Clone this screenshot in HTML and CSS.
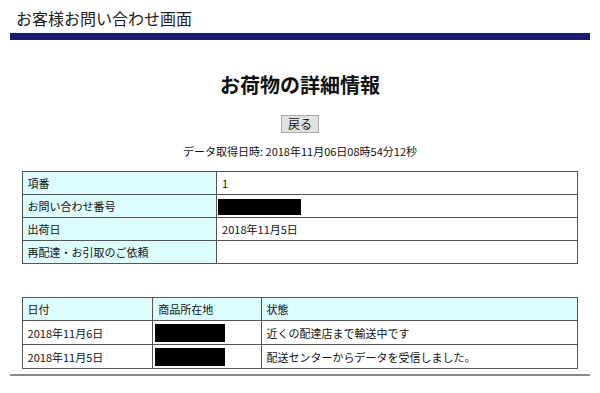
FILE: index.html
```html
<!DOCTYPE html>
<html lang="ja">
<head>
  <meta charset="UTF-8">
  <title>お客様お問い合わせ画面</title>
  <link rel="stylesheet" href="styles.css">
</head>
<body>
  <div class="page">
    <header>
      <div class="site-title">お客様お問い合わせ画面</div>
    </header>

    <h1>お荷物の詳細情報</h1>

    <div class="back">
      <button type="button">戻る</button>
    </div>

    <p class="fetched">データ取得日時: 2018年11月06日08時54分12秒</p>

    <!-- 詳細 -->
    <table class="detail">
      <tr>
        <th>項番</th>
        <td>1</td>
      </tr>
      <tr>
        <th>お問い合わせ番号</th>
        <td><span class="mask mask-no"></span></td>
      </tr>
      <tr>
        <th>出荷日</th>
        <td>2018年11月5日</td>
      </tr>
      <tr>
        <th>再配達・お引取のご依頼</th>
        <td></td>
      </tr>
    </table>

    <!-- 履歴 -->
    <table class="history">
      <tr>
        <th class="col-date">日付</th>
        <th class="col-place">商品所在地</th>
        <th>状態</th>
      </tr>
      <tr>
        <td>2018年11月6日</td>
        <td><span class="mask mask-place"></span></td>
        <td>近くの配達店まで輸送中です</td>
      </tr>
      <tr>
        <td>2018年11月5日</td>
        <td><span class="mask mask-place"></span></td>
        <td>配送センターからデータを受信しました。</td>
      </tr>
    </table>

    <hr>
  </div>
</body>
</html>
```

FILE: styles.css
```css
body {
  font-family: "Noto Sans CJK JP", "Noto Sans", sans-serif;
  margin: 0;
  padding: 0;
  background-color: #fff;
  color: #111;
}

.page {
  width: 580px;
  margin: 0 0 0 10px;
}

header {
  border-bottom: 7px solid #1b1b6f;
  padding: 6px 0 3px 6px;
}

.site-title {
  font-size: 16px;
  line-height: 24px;
  color: #222;
}

h1 {
  text-align: center;
  font-size: 20px;
  line-height: 24px;
  font-weight: 700;
  margin: 33px 0 13px;
}

.back {
  text-align: center;
}

.back button {
  font-family: inherit;
  font-size: 12px;
  line-height: 14px;
  padding: 1px 6px;
  background-color: #e1e1e1;
  border: 1px solid #adadad;
  color: #111;
}

.fetched {
  text-align: center;
  font-size: 11px;
  line-height: 16px;
  margin: 9px 0 12px;
}

table {
  width: 96%;
  margin: 0 auto;
  border-collapse: collapse;
  border: 1px solid #333;
  font-size: 11px;
}

th, td {
  height: 22px;
  padding: 0 5px;
  text-align: left;
  font-weight: 400;
  border: 1px solid #555;
}

.detail th {
  width: 35%;
  background-color: #ddfcfc;
}

.detail tr:nth-child(2) th,
.detail tr:nth-child(2) td,
.detail tr:nth-child(3) th,
.detail tr:nth-child(3) td {
  border-top-color: #999;
}

.history {
  margin-top: 33px;
}

.history th {
  background-color: #ddfcfc;
  height: 22px;
}

.history td {
  height: 23px;
}

.col-date {
  width: 23.5%;
}

.col-place {
  width: 19.5%;
}

.history td:nth-child(2) {
  padding: 0 2px;
}

.mask {
  display: inline-block;
  background-color: #000;
  vertical-align: middle;
}

.mask-no {
  width: 83px;
  height: 16px;
  margin-left: -4px;
}

.mask-place {
  width: 70px;
  height: 18px;
}

hr {
  border: none;
  border-top: 2px solid #888;
  margin: 5px 0 0;
}
```
